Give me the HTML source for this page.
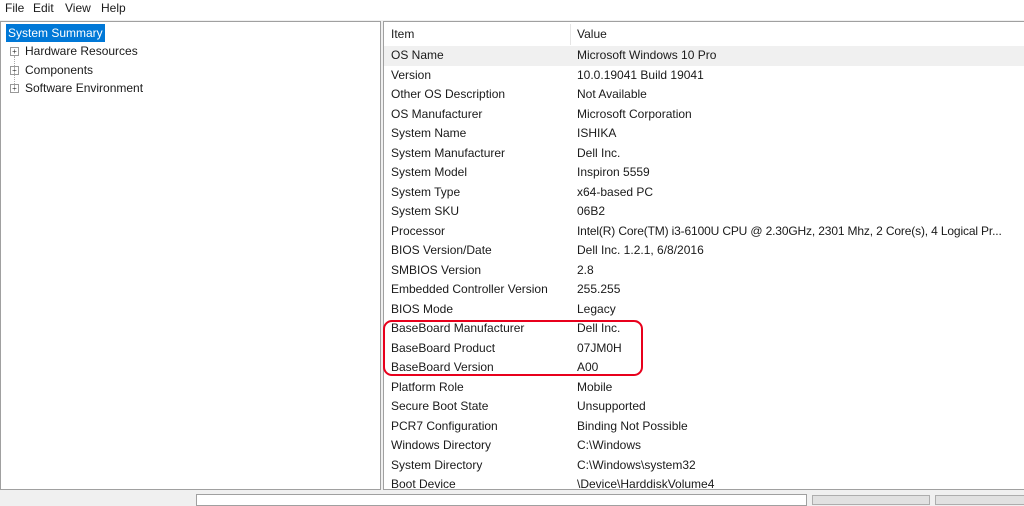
<!DOCTYPE html>
<html><head><style>
body{margin:0;width:1024px;height:501px;overflow:hidden;background:#f0f0f0;font-family:"Liberation Sans",sans-serif;font-size:12px;color:#1a1a1a;position:relative}
.menu{position:absolute;left:0;top:0;width:1024px;height:20px;background:#fff}
.menu span{position:absolute;top:1px;font-size:12px}
.left{position:absolute;left:0;top:21px;width:379px;height:467px;background:#fff;border:1px solid #a0a0a0}
.right{position:absolute;left:383px;top:21px;width:641px;height:467px;background:#fff;border:1px solid #a0a0a0;border-right:none;overflow:hidden}
.sel{position:absolute;left:5px;top:2px;background:#0078d7;color:#fff;padding:1px 2px;height:16px;line-height:16px}
.tree{position:absolute;left:24px;font-size:12px}
.plus{position:absolute;left:9px;width:7px;height:7px;border:1px solid #999;font-size:8px;line-height:7px;text-align:center;color:#333}
.row{position:absolute;left:0;width:641px;height:19.5px;line-height:19.5px}
.row span{position:absolute;left:7px}
.row b{font-weight:normal;position:absolute;left:193px;white-space:nowrap}
.hdr{position:absolute;left:0;top:2px;width:641px;height:21px;line-height:21px}
.hdr span{position:absolute;left:7px}.hdr b{font-weight:normal;position:absolute;left:193px}
.hdr i{position:absolute;left:186px;top:0;width:1px;height:21px;background:#e5e5e5}
.red{position:absolute;left:383px;top:320px;width:256px;height:52px;border:2px solid #e8001c;border-radius:9px}
.inp{position:absolute;left:196px;top:494px;width:609px;height:10px;background:#fff;border:1px solid #a0a0a0}
.btn{position:absolute;top:495px;height:8px;background:#e1e1e1;border:1px solid #adadad}
</style></head><body>
<div class="menu"><span style="left:5px">File</span><span style="left:33px">Edit</span><span style="left:65px">View</span><span style="left:101px">Help</span></div>
<div class="left">
<div class="sel">System Summary</div>
<div class="plus" style="top:25px">+</div><div class="tree" style="top:22px">Hardware Resources</div>
<div class="plus" style="top:44px">+</div><div class="tree" style="top:41px">Components</div>
<div class="plus" style="top:62px">+</div><div class="tree" style="top:59px">Software Environment</div>
<div style="position:absolute;left:13px;top:34px;height:34px;border-left:1px dotted #aaa"></div>
</div>
<div class="right">
<div class="hdr"><span>Item</span><i></i><b>Value</b></div>
<div class="row" style="top:24px;background:#f0f0f0"><span>OS Name</span><b>Microsoft Windows 10 Pro</b></div>
<div class="row" style="top:43.5px"><span>Version</span><b>10.0.19041 Build 19041</b></div>
<div class="row" style="top:63px"><span>Other OS Description</span><b>Not Available</b></div>
<div class="row" style="top:82.5px"><span>OS Manufacturer</span><b>Microsoft Corporation</b></div>
<div class="row" style="top:102px"><span>System Name</span><b>ISHIKA</b></div>
<div class="row" style="top:121.5px"><span>System Manufacturer</span><b>Dell Inc.</b></div>
<div class="row" style="top:141px"><span>System Model</span><b>Inspiron 5559</b></div>
<div class="row" style="top:160.5px"><span>System Type</span><b>x64-based PC</b></div>
<div class="row" style="top:180px"><span>System SKU</span><b>06B2</b></div>
<div class="row" style="top:199.5px"><span>Processor</span><b style="letter-spacing:-0.15px">Intel(R) Core(TM) i3-6100U CPU @ 2.30GHz, 2301 Mhz, 2 Core(s), 4 Logical Pr...</b></div>
<div class="row" style="top:219px"><span>BIOS Version/Date</span><b>Dell Inc. 1.2.1, 6/8/2016</b></div>
<div class="row" style="top:238.5px"><span>SMBIOS Version</span><b>2.8</b></div>
<div class="row" style="top:258px"><span>Embedded Controller Version</span><b>255.255</b></div>
<div class="row" style="top:277.5px"><span>BIOS Mode</span><b>Legacy</b></div>
<div class="row" style="top:297px"><span>BaseBoard Manufacturer</span><b>Dell Inc.</b></div>
<div class="row" style="top:316.5px"><span>BaseBoard Product</span><b>07JM0H</b></div>
<div class="row" style="top:336px"><span>BaseBoard Version</span><b>A00</b></div>
<div class="row" style="top:355.5px"><span>Platform Role</span><b>Mobile</b></div>
<div class="row" style="top:375px"><span>Secure Boot State</span><b>Unsupported</b></div>
<div class="row" style="top:394.5px"><span>PCR7 Configuration</span><b>Binding Not Possible</b></div>
<div class="row" style="top:414px"><span>Windows Directory</span><b>C:\Windows</b></div>
<div class="row" style="top:433.5px"><span>System Directory</span><b>C:\Windows\system32</b></div>
<div class="row" style="top:453px"><span>Boot Device</span><b>\Device\HarddiskVolume4</b></div>
</div>
<div class="red"></div>
<div class="inp"></div>
<div class="btn" style="left:812px;width:116px"></div>
<div class="btn" style="left:935px;width:89px"></div>
</body></html>
